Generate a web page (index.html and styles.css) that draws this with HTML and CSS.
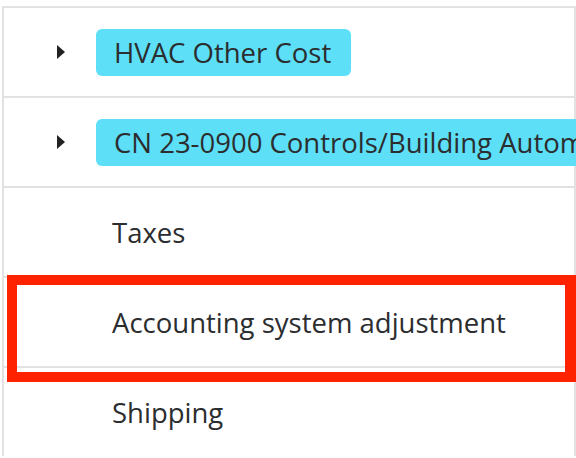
FILE: index.html
```html
<!DOCTYPE html>
<html lang="en">
<head>
    <meta charset="UTF-8">
    <meta name="viewport" content="width=device-width, initial-scale=1.0">
    <title>Cost Codes</title>
    <link rel="stylesheet" href="styles.css">
</head>
<body>
    <div class="cost-table">
        <!-- Grouped cost codes -->
        <div class="row">
            <span class="caret"></span>
            <span class="tag">HVAC Other Cost</span>
        </div>
        <div class="row">
            <span class="caret"></span>
            <span class="tag">CN 23-0900 Controls/Building Automation</span>
        </div>

        <!-- Plain line items -->
        <div class="row">
            <span class="label">Taxes</span>
        </div>
        <div class="row">
            <span class="label">Accounting system adjustment</span>
        </div>
        <div class="row">
            <span class="label">Shipping</span>
        </div>

        <div class="highlight"></div>
    </div>
</body>
</html>
```

FILE: styles.css
```css
html, body {
    overflow: hidden;
}
body {
    font-family: "Open Sans", "DejaVu Sans", sans-serif;
    margin: 0;
    background-color: white;
    color: #2b2d2f;
}
.cost-table {
    position: relative;
    margin: 6px 0 0 2px;
    width: 574px;
    box-sizing: border-box;
    border-left: 2px solid #e2e2e2;
    border-right: 2px solid #e2e2e2;
}
.row {
    display: flex;
    align-items: center;
    height: 88px;
    border-top: 2px solid #e2e2e2;
    white-space: nowrap;
}
.row:last-of-type {
    border-bottom: 2px solid #e2e2e2;
}
.caret {
    width: 0;
    height: 0;
    margin-left: 53px;
    margin-right: 31px;
    border-top: 7px solid transparent;
    border-bottom: 7px solid transparent;
    border-left: 8px solid #222;
}
.tag {
    background-color: #5ddff7;
    border-radius: 6px;
    height: 47px;
    line-height: 47px;
    padding: 0 20px 0 18px;
    font-size: 27.5px;
    font-weight: 500;
}
.label {
    margin-left: 108px;
    font-size: 27.5px;
    font-weight: 500;
}
.highlight {
    position: absolute;
    left: 3px;
    top: 269px;
    width: 569px;
    height: 107px;
    box-sizing: border-box;
    border: 10px solid #ff2200;
    border-right-width: 11px;
}
```
